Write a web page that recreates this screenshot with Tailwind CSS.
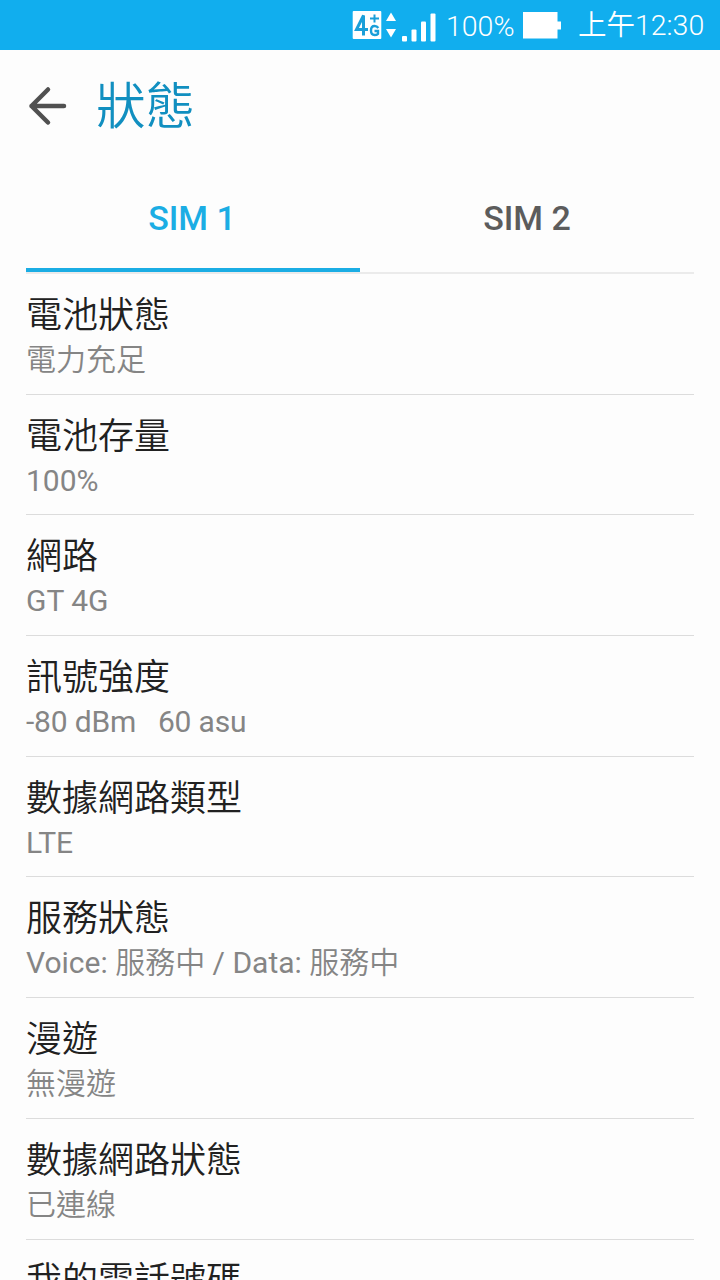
<!DOCTYPE html>
<html lang="zh-Hant">
<head>
    <meta charset="UTF-8">
    <meta name="viewport" content="width=device-width, initial-scale=1.0">
    <title>狀態</title>
    <script src="https://cdn.jsdelivr.net/npm/@tailwindcss/browser@4"></script>
</head>
<body class="h-screen overflow-hidden bg-[#fdfdfd] font-[Roboto,'Noto_Sans_CJK_TC_DemiLight','Noto_Sans_CJK_TC',sans-serif] text-[#212121]">
<!-- Status bar -->
<div class="flex h-[50px] items-center justify-end bg-[#11aeee] pr-4 text-white">
    <svg class="h-[50px] w-[86px] shrink-0" viewBox="352 0 86 50">
        <!-- 4G+ -->
        <rect x="352.7" y="11" width="28.6" height="28" rx="1" fill="#fff"/>
        <path d="M363.500 35.500V15.500L356.500 29.500H368" fill="none" stroke="#1a9fd9" stroke-width="3"/>
        <path d="M374.5 14.500v8M370 18.5h9" fill="none" stroke="#1a9fd9" stroke-width="2"/>
        <path d="M378.300 28Q377 26 374.600 26Q371 26 371 30.500Q371 35 374.600 35Q376.800 35 378 33.800V31H374.500" fill="none" stroke="#1a9fd9" stroke-width="2.4"/>
        <!-- data arrows -->
        <path d="M391 12.5l5 8.5h-10zM386 29h10l-5 8.500z" fill="#fff"/>
        <!-- signal -->
        <rect x="402" y="36" width="5" height="5.500" rx="1" fill="#fff"/>
        <rect x="411.500" y="29.500" width="5" height="12" rx="1" fill="#fff"/>
        <rect x="421" y="21.500" width="5" height="20" rx="1" fill="#fff"/>
        <rect x="430.500" y="13.500" width="5" height="28" rx="1" fill="#fff"/>
    </svg>
    <span class="mt-[3px] ml-2 w-[68px] text-[28.5px] leading-[50px] font-light whitespace-nowrap">100%</span>
    <svg class="ml-2 h-[50px] w-[40px] shrink-0" viewBox="522 0 40 50">
        <path d="M523 12h34.500v9.500h3.500v8h-3.500V38.500H523z" fill="#fff"/>
    </svg>
    <span class="mt-[2px] ml-4 w-[126px] text-[28.5px] leading-[50px] font-light whitespace-nowrap">上午12:30</span>
</div>

<!-- Title -->
<div class="flex h-[114px] items-start pl-[26px]">
    <svg class="mt-[34px] h-[44px] w-[44px]" viewBox="26 84 44 44" fill="none" stroke="#505050" stroke-width="4.500" stroke-linecap="round" stroke-linejoin="round">
        <path d="M64 106H31.500M48 89.500L31.500 106L48 122.500"/>
    </svg>
    <h1 class="mt-[22px] ml-[26px] text-[49.5px] leading-[70px] text-[#118fc0]">狀態</h1>
</div>

<!-- Tabs -->
<div class="mx-[26px] flex h-[110px] border-b-2 border-[#ebebeb] text-center text-[34px] leading-[108px] font-medium">
    <div class="w-1/2 border-b-4 border-[#1badE4] pr-[2px] text-[#1badE4]">SIM 1</div>
    <div class="w-1/2 text-[#5c5c5c]">SIM 2</div>
</div>

<!-- Settings list -->
<ul class="mx-[26px]">
    <li class="h-[120.70px] border-b border-[#dcdcdc] pt-[18px]">
        <p class="text-[36px] leading-[48px]">電池狀態</p>
        <p class="-mt-px text-[30px] leading-[42px] text-[#858585]">電力充足</p>
    </li>
    <li class="h-[120.70px] border-b border-[#dcdcdc] pt-[18px]">
        <p class="text-[36px] leading-[48px]">電池存量</p>
        <p class="-mt-px text-[30px] leading-[42px] text-[#858585]">100%</p>
    </li>
    <li class="h-[120.70px] border-b border-[#dcdcdc] pt-[18px]">
        <p class="text-[36px] leading-[48px]">網路</p>
        <p class="-mt-px text-[30px] leading-[42px] text-[#858585]">GT 4G</p>
    </li>
    <li class="h-[120.70px] border-b border-[#dcdcdc] pt-[18px]">
        <p class="text-[36px] leading-[48px]">訊號強度</p>
        <p class="-mt-px text-[30px] leading-[42px] tracking-[-0.18px] whitespace-pre text-[#858585]">-80 dBm   60 asu</p>
    </li>
    <li class="h-[120.70px] border-b border-[#dcdcdc] pt-[18px]">
        <p class="text-[36px] leading-[48px]">數據網路類型</p>
        <p class="-mt-px text-[30px] leading-[42px] text-[#858585]">LTE</p>
    </li>
    <li class="h-[120.70px] border-b border-[#dcdcdc] pt-[18px]">
        <p class="text-[36px] leading-[48px]">服務狀態</p>
        <p class="-mt-px text-[30px] leading-[42px] text-[#858585]">Voice: 服務中 / Data: 服務中</p>
    </li>
    <li class="h-[120.70px] border-b border-[#dcdcdc] pt-[18px]">
        <p class="text-[36px] leading-[48px]">漫遊</p>
        <p class="-mt-px text-[30px] leading-[42px] text-[#858585]">無漫遊</p>
    </li>
    <li class="h-[120.70px] border-b border-[#dcdcdc] pt-[18px]">
        <p class="text-[36px] leading-[48px]">數據網路狀態</p>
        <p class="-mt-px text-[30px] leading-[42px] text-[#858585]">已連線</p>
    </li>
    <li class="pt-[17px]">
        <p class="text-[36px] leading-[48px]">我的電話號碼</p>
    </li>
</ul>
</body>
</html>
